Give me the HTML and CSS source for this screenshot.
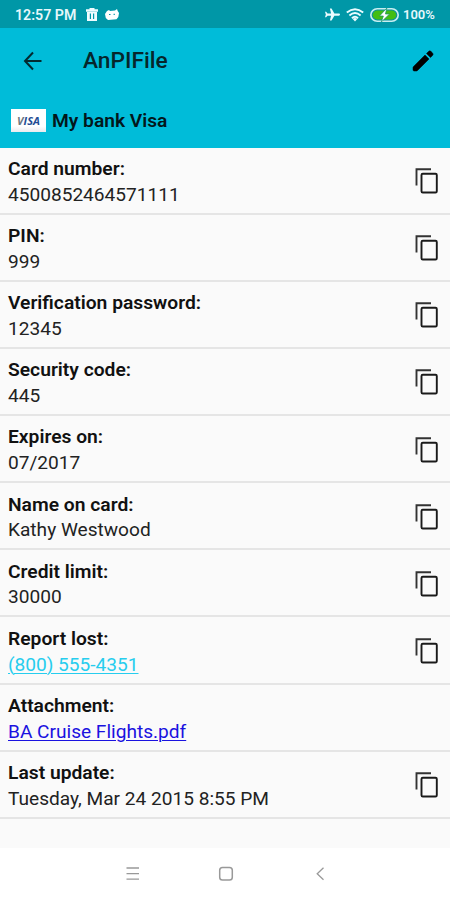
FILE: index.html
```html
<!DOCTYPE html>
<html lang="en">
<head>
<meta charset="utf-8">
<title>AnPIFile</title>
<link rel="stylesheet" href="styles.css">
</head>
<body>
<svg width="0" height="0" class="defs">
  <symbol id="copy" viewBox="0 0 24 28">
    <path d="M1.500 18.500V2.200H16" fill="none" stroke="#333" stroke-width="1.900"/>
    <rect x="6.500" y="6.700" width="15.300" height="18.800" rx="1.300" fill="none" stroke="#1a1a1a" stroke-width="1.900"/>
  </symbol>
</svg>
<div class="status">
  <span class="time">12:57 PM</span>
  <svg class="trash" width="12" height="14" viewBox="0 0 12 14"><path fill="#f0fcff" fill-rule="evenodd" d="M3.500 0h5v1.300H12v2.500H0V1.300h3.500zM1 3.500h10V13H1zM3.800 5.500v5.500h1.200V5.500zM7 5.500v5.500h1.200V5.500z"/></svg>
  <svg class="mask" width="14" height="11" viewBox="0 0 14 11"><path fill="#fff" d="M2 2l2-1 1 1 5-.5L12 0l.7 2L14 4l-.7 4-1.800 2.300L3 11 .8 9 0 5z"/><path d="M4 5.500h1.500M8.500 5.300H10" stroke="#0097a7" stroke-width="1"/></svg>
  <span class="spacer"></span>
  <svg width="15" height="13" viewBox="0 0 16 13"><path fill="#eafcff" d="M16 6.500c0-.8-.5-1.200-1.300-1.200H10L7 0H5.200l1.300 5.300H2.700L1.200 3.500H0l.9 3-.9 3h1.200l1.500-1.800h3.800L5.200 13H7l3-5.300h4.700c.8 0 1.300-.4 1.300-1.200z"/></svg>
  <svg class="wifi" width="18" height="14" viewBox="0 0 18 14"><g fill="none" stroke="#eafcff" stroke-width="1.900"><path d="M.8 4.500Q9-2.200 17.200 4.500M3.400 7.400Q9 2.800 14.600 7.400M5.900 10.200Q9 7.500 12.100 10.200"/></g><path d="M6.700 11Q9 9.200 11.300 11L9 13.600z" fill="#eafcff"/></svg>
  <svg class="battery" width="29" height="14" viewBox="0 0 28 14" preserveAspectRatio="none"><rect x=".8" y=".8" width="26.400" height="12.400" rx="6.200" fill="#08909e" stroke="#c9eef0" stroke-width="1.600"/><rect x="2.600" y="2.600" width="22.800" height="8.800" rx="4.400" fill="#43bd12"/><path d="M16.300 0L9.200 8h3.700l-2 6 8-8h-4z" fill="#fff" stroke="#168f68" stroke-width=".7"/></svg>
  <span class="percent">100%</span>
</div>
<header>
  <div class="bar">
    <svg class="back" width="20" height="20" viewBox="0 0 20 20"><path d="M10 1.500L2 10l8 8.500M2 10h16.500" fill="none" stroke="#032a30" stroke-width="2"/></svg>
    <h1>AnPIFile</h1>
    <svg class="edit" width="22" height="22" viewBox="0 0 22 22"><path d="M1.500 16.500L13 5l4 4L5.500 20.500q-.5.500-1.200.500H2.200Q1 21 1 19.800v-2.100q0-.7.500-1.200zM14.500 3.500l2-2q1.300-1.300 2.600 0l1.400 1.400q1.300 1.300 0 2.600l-2 2z" stroke="#000" stroke-width=".5" stroke-linejoin="round"/></svg>
  </div>
  <div class="account"><span class="visa"><i>V</i>ISA</span><span>My bank Visa</span></div>
</header>
<main>
  <section><div><b>Card number:</b><p>4500852464571111</p></div><svg><use href="#copy"/></svg></section>
  <section><div><b>PIN:</b><p>999</p></div><svg><use href="#copy"/></svg></section>
  <section><div><b>Verification password:</b><p>12345</p></div><svg><use href="#copy"/></svg></section>
  <section><div><b>Security code:</b><p>445</p></div><svg><use href="#copy"/></svg></section>
  <section><div><b>Expires on:</b><p>07/2017</p></div><svg><use href="#copy"/></svg></section>
  <section><div><b>Name on card:</b><p>Kathy Westwood</p></div><svg><use href="#copy"/></svg></section>
  <section><div><b>Credit limit:</b><p>30000</p></div><svg><use href="#copy"/></svg></section>
  <section><div><b>Report lost:</b><p><a class="phone">(800) 555-4351</a></p></div><svg><use href="#copy"/></svg></section>
  <section><div><b>Attachment:</b><p><a class="file">BA Cruise Flights.pdf</a></p></div></section>
  <section><div><b>Last update:</b><p>Tuesday, Mar 24 2015 8:55 PM</p></div><svg><use href="#copy"/></svg></section>
</main>
<nav>
  <svg width="14" height="16" viewBox="0 0 14 16"><path d="M.5 2h12.500M.5 7.600h12.500M.5 13.200h12.500" stroke="#999" stroke-width="1.300"/></svg>
  <svg class="home" width="16" height="16" viewBox="0 0 16 16"><rect x="1.700" y="1.400" width="12.600" height="12.600" rx="2.800" fill="none" stroke="#999" stroke-width="1.500"/></svg>
  <svg width="10" height="16" viewBox="0 0 10 16"><path d="M8.500 1.700L2.200 7.700l6.300 6" fill="none" stroke="#999" stroke-width="1.300"/></svg>
</nav>
</body>
</html>
```
FILE: styles.css
```css
* { box-sizing: border-box; margin: 0; padding: 0; }
body { width: 450px; height: 900px; overflow: hidden; display: flex; flex-direction: column; font-family: Roboto, sans-serif; background: #fafafa; color: #111; }
svg { display: block; flex: none; }
.defs { position: absolute; }
.status { height: 28px; flex: none; background: #0097a7; display: flex; align-items: center; padding: 1px 15px 0 15px; color: #e6f8fb; font-size: 14.200px; font-weight: 600; }
.time { width: 63px; white-space: nowrap; }
.trash { margin-left: 8px; }
.mask { margin-left: 7px; }
.spacer { flex: 1; }
.wifi { margin-left: 6px; }
.battery { margin-left: 6px; }
.percent { margin-left: 4px; width: 32px; font-size: 13px; white-space: nowrap; }
header { height: 119.500px; flex: none; background: #00bcd9; }
.bar { height: 65px; display: flex; align-items: center; padding: 0 16px 0 23px; }
h1 { flex: 1; margin-left: 40px; font-size: 22.700px; font-weight: 500; color: #06262b; }
.account { display: flex; align-items: center; height: 54px; padding-left: 11px; font-size: 19.200px; font-weight: 600; color: #03171b; }
.visa { width: 35px; height: 23px; margin-right: 6px; background: linear-gradient(#fff 75%, #e9eaee); display: flex; align-items: center; justify-content: center; font: italic 700 11px "Open Sans", sans-serif; color: #234d94; }
.visa i { color: #6d7780; }
main { flex: 1; }
section { height: 67.150px; border-bottom: 2px solid #e5e5e5; display: flex; align-items: center; justify-content: space-between; padding: 3px 11px 0 8px; font-size: 19.100px; line-height: 25.700px; }
section b { display: block; font-size: 19.250px; font-weight: 600; }
section p { color: #222; }
section svg { width: 24px; height: 28px; margin-top: -1px; }
a { text-decoration: underline; text-decoration-thickness: 1px; text-underline-offset: 2px; }
.phone { color: #27cdee; }
.file { color: #1a12e0; }
nav { height: 52px; flex: none; background: #fff; display: flex; align-items: center; justify-content: space-between; padding: 0 125px 0 126px; }
.home { margin-right: 4px; }
```
